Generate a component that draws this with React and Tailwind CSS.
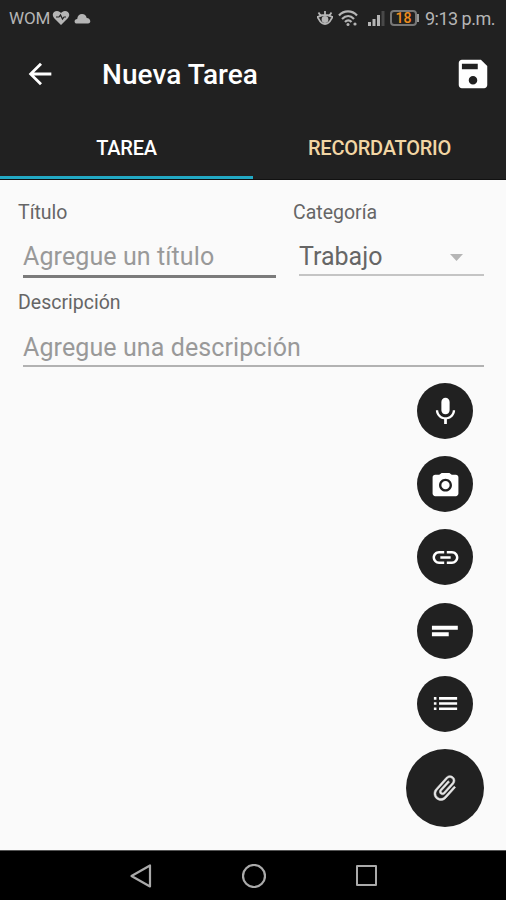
import React from 'react';

const Icon = ({ d, size, className = '' }) => (
  <svg width={size} height={size} viewBox="0 0 24 24" fill="currentColor" className={`shrink-0 ${className}`}>
    <path d={d} />
  </svg>
);

const ICONS = {
  back: 'M20 11H7.83l5.59-5.59L12 4l-8 8 8 8 1.41-1.41L7.83 13H20v-2z',
  save: 'M17 3H5c-1.11 0-2 .9-2 2v14c0 1.1.89 2 2 2h14c1.1 0 2-.9 2-2V7l-4-4zm-5 15.7c-1.5 0-2.7-1.2-2.7-2.7s1.2-2.7 2.7-2.7 2.7 1.2 2.7 2.7-1.2 2.7-2.7 2.7zm3-9.7H5V5.5h10V9z',
  mic: 'M12 14c1.66 0 2.99-1.34 2.99-3L15 5c0-1.66-1.34-3-3-3S9 3.34 9 5v6c0 1.66 1.34 3 3 3zm5.3-3c0 3-2.54 5.1-5.3 5.1S6.7 14 6.7 11H5c0 3.41 2.72 6.23 6 6.72V21h2v-3.28c3.28-.48 6-3.3 6-6.72h-1.7z',
  camera: 'M9 3 7.17 4.500H4c-1.1 0-2 .9-2 2V19c0 1.1.9 2 2 2h16c1.1 0 2-.9 2-2V6.500c0-1.1-.9-2-2-2h-3.17L15 3H9zm3 14.500c-2.76 0-5-2.24-5-5s2.24-5 5-5 5 2.24 5 5-2.24 5-5 5zm0-1.8a3.2 3.2 0 1 0 0-6.4 3.2 3.2 0 0 0 0 6.4z',
  link: 'M3.9 12c0-1.71 1.39-3.1 3.1-3.1h4V7H7c-2.76 0-5 2.24-5 5s2.24 5 5 5h4v-1.9H7c-1.71 0-3.1-1.39-3.1-3.1zM8 13h8v-2H8v2zm9-6h-4v1.9h4c1.71 0 3.1 1.39 3.1 3.1s-1.39 3.1-3.1 3.1h-4V17h4c2.76 0 5-2.24 5-5s-2.24-5-5-5z',
  text: 'M2.2 8h19.4v3H2.2zM2.2 13h12.6v3H2.2z',
  list: 'M3 13h2v-2H3v2zm0 4h2v-2H3v2zm0-8h2V7H3v2zm4 4h14v-2H7v2zm0 4h14v-2H7v2zM7 7v2h14V7H7z',
  clip: 'M16.5 6v11.5c0 2.21-1.79 4-4 4s-4-1.79-4-4V5c0-1.38 1.12-2.5 2.5-2.5s2.5 1.12 2.5 2.5v10.5c0 .55-.45 1-1 1s-1-.45-1-1V6H10v9.5c0 1.38 1.12 2.5 2.5 2.5s2.5-1.12 2.5-2.5V5c0-2.21-1.79-4-4-4S7 2.79 7 5v12.5c0 3.04 2.46 5.5 5.5 5.5s5.5-2.46 5.5-5.5V6h-1.5z',
};

const actions = [
  { name: 'mic', size: 33 },
  { name: 'camera', size: 31 },
  { name: 'link', size: 31 },
  { name: 'text', size: 32 },
  { name: 'list', size: 31 },
];

const StatusBar = () => (
  <div className="flex h-9 items-center pl-[9px] pr-[11px] text-[#b5b5b5]">
    <span className="pt-[2px] text-[17px] tracking-[-0.2px]">WOM</span>
    <svg width="18" height="16" viewBox="0 0 18 16" className="ml-[2px]">
      <path d="M9 15 2 8C-1 4 2 1 5 1c2 0 3 1 4 2 1-1 2-2 4-2 3 0 6 3 3 7z" fill="currentColor" />
      <path d="M4 7h3l1.5-2 2 4L12 7h2" fill="none" stroke="#212121" strokeWidth="1.2" />
    </svg>
    <svg width="17" height="11" viewBox="0 0 17 11" className="ml-[4px]">
      <path d="M3 10.5C-.5 10.5 0 6 3.200 6 3.500 2.500 5.500 1 8 1c2.500 0 4.200 1.500 4.700 4 4 0 5 5.500 1.300 5.500z" fill="currentColor" />
    </svg>

    <div className="ml-auto flex items-center">
      <svg width="18" height="18" viewBox="0 0 18 18" fill="none" stroke="currentColor" strokeWidth="1.8">
        <path d="M1 8c2 0 3-2 8-2s6 2 8 2c-2 0-2 7-8 7S3 8 1 8zM9 6V2M4.5 6.5l-2-3M13.5 6.5l2-3" />
        <circle cx="9" cy="10.5" r="2.5" fill="currentColor" />
      </svg>
      <svg width="21" height="18" viewBox="0 0 21 18" fill="none" stroke="currentColor" strokeWidth="2.2" className="ml-[4px]">
        <path d="M1 6.5c5-5.5 13-5.5 18 0M4 10c4-4 8.5-4 12 0M7 13c2-2.300 4.500-2.300 6.500 0" />
        <circle cx="10" cy="15.5" r="1.5" fill="currentColor" stroke="none" />
        <circle cx="17" cy="15" r="1.6" fill="currentColor" stroke="none" />
      </svg>
      <svg width="18" height="16" viewBox="0 0 18 16" fill="currentColor" className="ml-[9px]">
        <path d="M0 12h3v4H0zM4.5 9h3v7h-3zM9 5h3v11H9z" />
        <path d="M13.5 1h3v15h-3z" fill="#484848" />
      </svg>
      <div className="ml-[4px] flex h-4 w-[27px] items-center justify-center rounded-[4px] border-2 border-[#777] text-[14px] leading-none font-medium text-[#f08c1c]">
        18
      </div>
      <div className="h-2 w-[2px] bg-[#999]" />
      <span className="ml-[6px] text-[18px] tracking-[-0.5px]">9:13 p.m.</span>
    </div>
  </div>
);

const App = () => {
  return (
    <div className="flex h-[900px] w-[506px] flex-col overflow-hidden bg-[#fafafa] font-['Roboto',sans-serif]">
      <header className="flex h-[180px] shrink-0 flex-col border-b border-[#111] bg-[#212121] text-white">
        <StatusBar />
        <div className="flex h-[76px] items-center pr-[14px] pl-[23px]">
          <Icon d={ICONS.back} size={34} />
          <h1 className="ml-[45px] pt-[2px] text-[28px] font-medium tracking-[0.05px]">Nueva Tarea</h1>
          <Icon d={ICONS.save} size={38} className="ml-auto" />
        </div>
        <nav className="grid flex-1 grid-cols-2 text-[20px] font-medium tracking-[-0.25px]">
          <button className="border-b-[3px] border-[#22a9c4] pt-[8px]">TAREA</button>
          <button className="border-b-[3px] border-transparent pt-[8px] text-[#f2d6a4]">RECORDATORIO</button>
        </nav>
      </header>

      <main className="flex flex-1 flex-col pr-[22px] pl-[18px] text-[#666]">
        <div className="flex pt-[21px]">
          <label className="w-[275px] text-[19.5px] leading-6">
            Título
            <div className="ml-[5px] flex h-[53px] w-[253px] items-center border-b-[3px] border-[#7b7b7b] pt-[14px] text-[25px] tracking-[0.1px] text-[#999]">
              Agregue un título
            </div>
          </label>
          <div className="flex-1 text-[19.5px] leading-6">
            Categoría
            <div className="ml-[6px] flex h-[51px] items-center justify-between border-b-2 border-[#c4c4c4] pt-[15px] pr-[21px] text-[25px]">
              Trabajo
              <svg width="13" height="7" viewBox="0 0 13 7" fill="#b5b5b5">
                <path d="M0 0h13L6.5 7z" />
              </svg>
            </div>
          </div>
        </div>
        <label className="mt-[13px] text-[19.5px] leading-6">
          Descripción
          <div className="ml-[5px] flex h-[52px] items-center border-b-2 border-[#b2b2b2] pt-4 text-[25px] tracking-[0.1px] text-[#999]">
            Agregue una descripción
          </div>
        </label>

        <div className="mt-4 flex w-[78px] flex-col items-center gap-[17.2px] self-end text-white">
          {actions.map(({ name, size }) => (
            <button key={name} className="flex size-14 items-center justify-center rounded-full bg-[#212121]">
              <Icon d={ICONS[name]} size={size} />
            </button>
          ))}
          <button className="flex size-[78px] items-center justify-center rounded-full bg-[#212121] text-[#e6e6e6]">
            <Icon d={ICONS.clip} size={30} className="rotate-[42deg] stroke-current stroke-[0.4]" />
          </button>
        </div>
      </main>

      <footer className="flex h-[50px] shrink-0 items-center border-t border-[#555] bg-black pl-[130px]">
        <svg width="22" height="24" viewBox="0 0 22 24" fill="none" stroke="#aaa" strokeWidth="2.2" strokeLinejoin="round">
          <path d="M20 1.5v21L1.5 12z" />
        </svg>
        <svg width="24" height="24" viewBox="0 0 24 24" fill="none" stroke="#aaa" strokeWidth="2.2" className="ml-[90px]">
          <circle cx="12" cy="12" r="11" />
        </svg>
        <div className="ml-[90px] size-[21px] rounded-[1px] border-[2.5px] border-[#aaa]" />
      </footer>
    </div>
  );
};

export default App;
